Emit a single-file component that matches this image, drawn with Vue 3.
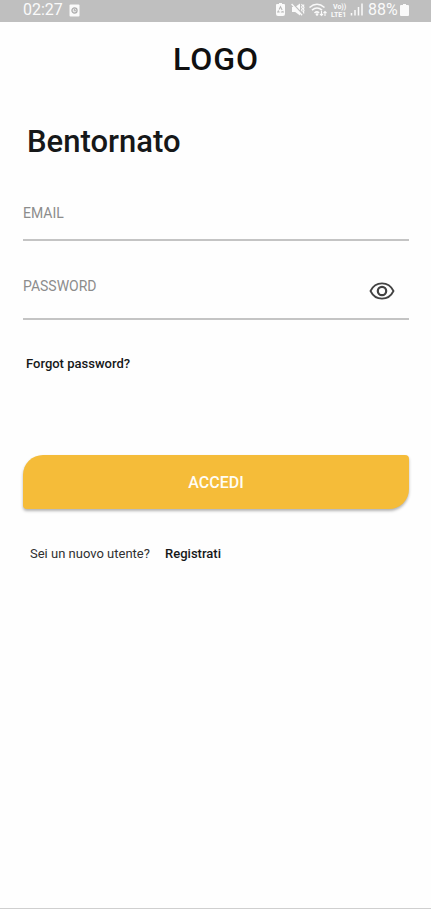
<script setup>
import { ref } from 'vue'

const email = ref('')
const password = ref('')
const visible = ref(false)
</script>

<template>
  <div class="screen">
    <header class="status">
      <div class="group">
        <span class="time">02:27</span>
        <svg class="alarm" width="11" height="13" viewBox="0 0 11 13" aria-hidden="true">
          <rect x="0.5" y="0.5" width="10" height="12" rx="1" fill="#fafafa" />
          <circle cx="5.5" cy="6.5" r="2.6" fill="#e4e4e4" stroke="#adadad" stroke-width="1.2" />
          <path d="M5.5 5v1.7h1.5" fill="none" stroke="#aaa" stroke-width="0.8" />
        </svg>
      </div>
      <div class="group">
        <svg width="135" height="18" viewBox="0 0 135 18" aria-hidden="true" class="signals">
          <path d="M3 3h2V2h3v1h2q1 0 1 1v9q0 2-2 2H4q-2 0-2-2V4q0-1 1-1z" fill="#fafafa" />
          <path d="M6.500 5.800l2.700 5.200H3.800z" fill="none" stroke="#b8b8b8" stroke-width="1.100" stroke-dasharray="3.500 1.200" />
          <path d="M18 6h3.200L26 2.500v12L21.200 11H18z" fill="#fafafa" />
          <path d="M18.500 2.500l10.500 11" stroke="#bfbfbf" stroke-width="1.600" />
          <path d="M17.600 3l10.500 11.200" fill="none" stroke="#fafafa" stroke-width="1.300" />
          <path d="M27.500 3l1 1.500-1 1.500 1 1.500-1 1.500 1 1.500M30 3.500l-.600 1.500.600 1.500-.600 1.500.600 1.500-.600 1.500.600 1.500" fill="none" stroke="#fafafa" stroke-width="1.100" />
          <g fill="none" stroke="#fafafa" stroke-width="1.600">
            <path d="M35.500 6.500q7.500-6.500 15 0" />
            <path d="M38 9.200q5-4.400 10 0" />
            <path d="M40.500 12q2.500-2.200 4.500 0" />
            <path d="M47.500 10v4.500M46 13l1.500 1.500 1.500-1.500M51 15v-4.500M49.500 12l1.500-1.500 1.500 1.500" stroke-width="1.100" />
          </g>
          <circle cx="43" cy="13.500" r="1.300" fill="#fafafa" />
          <text x="59" y="8" class="tiny">Vo))</text>
          <text x="57" y="16" class="tiny">LTE1</text>
          <path d="M77.500 12v2.500M81 9v5.500M84.500 6v8.500M88 2.500v12" stroke="#fafafa" stroke-width="1.500" />
          <text x="94" y="14" class="percent">88%</text>
          <path d="M127 4h2V3h3v1h2q1 0 1 1v9q0 1-1 1h-7q-1 0-1-1V5q0-1 1-1z" fill="#fafafa" />
        </svg>
      </div>
    </header>

    <main class="content">
      <div class="logo">LOGO</div>
      <h1>Bentornato</h1>

      <form @submit.prevent>
        <div class="field">
          <label v-show="!email" for="email">EMAIL</label>
          <input id="email" v-model="email" type="email" autocomplete="email" />
        </div>
        <div class="field password">
          <label v-show="!password" for="password">PASSWORD</label>
          <input id="password" v-model="password" :type="visible ? 'text' : 'password'" autocomplete="current-password" />
          <button class="eye" type="button" aria-label="Mostra password" @click="visible = !visible">
            <svg width="26" height="18" viewBox="0 0 26 18" fill="none" stroke="#424242" stroke-width="1.8">
              <path d="M1.500 9C4 3.900 8.200 1.400 13 1.400S22 3.900 24.500 9C22 14.100 17.800 16.600 13 16.600S4 14.100 1.500 9z" />
              <circle cx="13" cy="9" r="4.200" stroke-width="2.200" />
            </svg>
          </button>
        </div>

        <a class="forgot" href="#">Forgot password?</a>
        <button class="submit" type="submit">ACCEDI</button>
      </form>

      <p class="signup">Sei un nuovo utente? <a href="#">Registrati</a></p>
    </main>
  </div>
</template>

<style>
body {
  margin: 0;
  background: #fefefe;
}
</style>

<style scoped>
.screen {
  box-sizing: border-box;
  min-height: 100vh;
  border-bottom: 1px solid #cfcfcf;
  background: #fefefe;
  color: #161819;
  font-family: Roboto, "Liberation Sans", sans-serif;
}

.status {
  box-sizing: border-box;
  display: flex;
  justify-content: space-between;
  align-items: flex-start;
  height: 22px;
  padding: 1px 22px 0 23px;
  background: #bfbfbf;
  color: #fafafa;
}

.group {
  display: flex;
  align-items: center;
  gap: 6px;
  height: 18px;
}

.time {
  font-size: 16px;
  line-height: 18px;
}

.signals {
  display: block;
}

.tiny {
  fill: #fafafa;
  font-size: 7px;
  font-weight: 700;
}

.percent {
  fill: #fafafa;
  font-size: 16px;
}

.content {
  padding: 17px 22px 0 23px;
}

.logo {
  font-size: 32px;
  line-height: 40px;
  font-weight: 500;
  letter-spacing: 1px;
  text-align: center;
  color: #101010;
}

h1 {
  margin: 43px 4px 0;
  font-size: 31px;
  line-height: 40px;
  font-weight: 500;
}

form {
  display: flex;
  flex-direction: column;
  margin-top: 32px;
}

.field {
  display: grid;
  grid-template-columns: 1fr auto;
  height: 45px;
  border-bottom: 2px solid #c4c4c4;
}

.field label {
  grid-area: 1 / 1;
  align-self: start;
  padding-top: 10px;
  font-size: 14px;
  line-height: 18px;
  color: #8c8c8c;
}

.field input {
  grid-area: 1 / 1;
  min-width: 0;
  padding: 0;
  border: 0;
  outline: 0;
  background: transparent;
  font: inherit;
  font-size: 16px;
  color: inherit;
}

.password {
  height: 51px;
  margin-top: 26px;
}

.eye {
  grid-area: 1 / 2;
  display: flex;
  align-items: center;
  justify-content: center;
  align-self: start;
  margin: 0 14px 0 0;
  padding: 15px 0 0;
  border: 0;
  background: none;
}

.forgot {
  align-self: flex-start;
  margin: 35px 0 0 3px;
  font-size: 13px;
  line-height: 18px;
  font-weight: 500;
  color: inherit;
  text-decoration: none;
}

.submit {
  height: 54px;
  margin-top: 82px;
  padding: 0;
  border: 0;
  border-radius: 20px 4px 20px 4px;
  background: #f5bc39;
  box-shadow: 0 2px 3px rgba(0, 0, 0, 0.3);
  color: #fffdf5;
  font: inherit;
  font-size: 16px;
  font-weight: 500;
}

.signup {
  margin: 36px 7px 0;
  font-size: 13px;
  line-height: 18px;
  color: #303030;
}

.signup a {
  margin-left: 12px;
  font-weight: 500;
  color: #161819;
  text-decoration: none;
}
</style>
